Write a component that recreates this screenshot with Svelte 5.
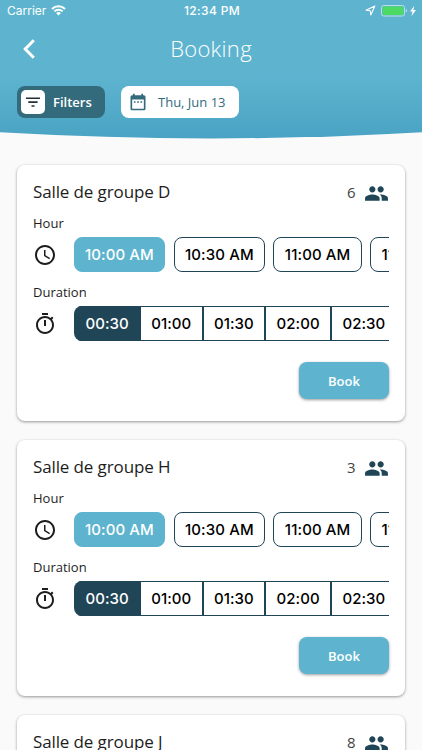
<script lang="ts">
    interface Room {
        name: string;
        capacity: number;
    }

    const rooms: Room[] = [
        {name: 'Salle de groupe D', capacity: 6},
        {name: 'Salle de groupe H', capacity: 3},
        {name: 'Salle de groupe J', capacity: 8},
    ];

    const hours = ['10:00 AM', '10:30 AM', '11:00 AM', '11:30 AM'];
    const durations = ['00:30', '01:00', '01:30', '02:00', '02:30'];

    let selectedHours = $state(rooms.map(() => 0));
    let selectedDurations = $state(rooms.map(() => 0));
</script>

<div class="screen">
    <header>
        <!-- Curved bottom edge of the header -->
        <svg class="backdrop" viewBox="0 0 422 140" preserveAspectRatio="none" aria-hidden="true">
            <defs>
                <linearGradient id="sea" x1="0" y1="0" x2="0" y2="1">
                    <stop offset="0" stop-color="#5eb4cf"/>
                    <stop offset="0.55" stop-color="#5eb4cf"/>
                    <stop offset="1" stop-color="#4aa3c4"/>
                </linearGradient>
            </defs>
            <path d="M0 0H422V132.3Q211 144.5 0 132.3Z" fill="url(#sea)"/>
        </svg>

        <div class="status-bar">
            <div class="status-left">
                <span class="carrier">Carrier</span>
                <svg width="15" height="11" viewBox="0 0 15 11" fill="none" stroke="#fff" stroke-width="2">
                    <path d="M1 4A9.2 9.2 0 0 1 14 4"/>
                    <path d="M3.4 6.4A5.8 5.8 0 0 1 11.6 6.4"/>
                    <path d="M7.5 10.6L5.1 8.1A3.4 3.4 0 0 1 9.9 8.1Z" fill="#fff" stroke="none"/>
                </svg>
            </div>
            <span class="clock">12:34 PM</span>
            <div class="status-right">
                <svg width="11" height="11" viewBox="0 0 11 11" fill="none" stroke="#fff" stroke-width="1.1" stroke-linejoin="round">
                    <path d="M9.8 1L1 5.3L5.2 5.8L5.8 10Z"/>
                </svg>
                <svg width="27" height="12" viewBox="0 0 27 12">
                    <rect x="0.5" y="0.5" width="23" height="10.5" rx="2.2" fill="none" stroke="#b9e0ea"/>
                    <rect x="1.6" y="1.6" width="20.8" height="8.3" rx="1.2" fill="#4cd964"/>
                    <path d="M24.8 4v3.6q1.3-.5 1.3-1.8t-1.3-1.8Z" fill="#b9e0ea"/>
                </svg>
                <svg class="bolt" width="6" height="10" viewBox="0 0 6 10" fill="#fff">
                    <path d="M4.2 0L0 5.6H2.5L1.5 10L6 4.1H3.4Z"/>
                </svg>
            </div>
        </div>

        <div class="title-bar">
            <button class="back" aria-label="Back">
                <svg width="12" height="20" viewBox="0 0 12 20" fill="none" stroke="#fff" stroke-width="3">
                    <path d="M10.8 1.2L2.2 10L10.8 18.8"/>
                </svg>
            </button>
            <h1>Booking</h1>
        </div>

        <div class="tools">
            <button class="filters">
                <span class="filters-icon">
                    <svg width="16" height="12" viewBox="0 0 16 12" fill="#252f35">
                        <path d="M1 1.4H15V3H1ZM3.3 5.3H12.6V6.9H3.3ZM6.5 9.2H9.5V10.7H6.5Z"/>
                    </svg>
                </span>
                Filters
            </button>
            <button class="date">
                <svg width="20" height="20" viewBox="0 0 24 24" fill="#336b7d">
                    <path d="M9 11H7v2h2v-2zm4 0h-2v2h2v-2zm4 0h-2v2h2v-2zm2-7h-1V2h-2v2H8V2H6v2H5c-1.11 0-1.99.9-1.99 2L3 20c0 1.1.89 2 2 2h14c1.1 0 2-.9 2-2V6c0-1.1-.9-2-2-2zm0 16H5V9h14v11z"/>
                </svg>
                <span>Thu, Jun 13</span>
            </button>
        </div>
    </header>

    <main>
        {#each rooms as room, r}
            <section class="card">
                <div class="card-head">
                    <h2>{room.name}</h2>
                    <div class="capacity">
                        <span>{room.capacity}</span>
                        <svg width="25" height="25" viewBox="0 0 24 24" fill="#1f4557">
                            <path d="M16 11c1.66 0 2.99-1.34 2.99-3S17.66 5 16 5c-1.66 0-3 1.34-3 3s1.34 3 3 3zm-8 0c1.66 0 2.99-1.34 2.99-3S9.66 5 8 5C6.34 5 5 6.34 5 8s1.34 3 3 3zm0 2c-2.33 0-7 1.17-7 3.5V19h14v-2.5c0-2.33-4.67-3.5-7-3.5zm8 0c-.29 0-.62.02-.97.05 1.16.84 1.97 1.97 1.97 3.45V19h6v-2.5c0-2.33-4.67-3.5-7-3.5z"/>
                        </svg>
                    </div>
                </div>

                <h3>Hour</h3>
                <div class="row">
                    <svg width="24" height="24" viewBox="0 0 24 24" fill="#1d1d1d">
                        <path d="M11.99 2C6.47 2 2 6.48 2 12s4.47 10 9.99 10C17.52 22 22 17.52 22 12S17.52 2 11.99 2zM12 20c-4.42 0-8-3.58-8-8s3.58-8 8-8 8 3.58 8 8-3.58 8-8 8zm.5-13H11v6l5.25 3.15.75-1.23-4.5-2.67z"/>
                    </svg>
                    <div class="hours">
                        {#each hours as hour, i}
                            <button class="hour" class:selected={selectedHours[r] === i}
                                    onclick={() => selectedHours[r] = i}>{hour}</button>
                        {/each}
                    </div>
                </div>

                <h3>Duration</h3>
                <div class="row">
                    <svg width="24" height="24" viewBox="0 0 24 24" fill="#1d1d1d">
                        <path d="M15 1H9v2h6V1zm-4 13h2V8h-2v6zm8.03-6.61l1.42-1.42c-.43-.51-.9-.99-1.41-1.41l-1.42 1.42C16.07 4.74 14.12 4 12 4c-4.97 0-9 4.03-9 9s4.02 9 9 9 9-4.03 9-9c0-2.12-.74-4.07-1.97-5.61zM12 20c-3.87 0-7-3.13-7-7s3.13-7 7-7 7 3.13 7 7-3.13 7-7 7z"/>
                    </svg>
                    <div class="durations">
                        {#each durations as duration, i}
                            <button class="duration" class:selected={selectedDurations[r] === i}
                                    onclick={() => selectedDurations[r] = i}>{duration}</button>
                        {/each}
                    </div>
                </div>

                <button class="book">Book</button>
            </section>
        {/each}
    </main>
</div>

<style>
    :global(body) {
        background: #fafafa;
    }

    .screen {
        height: 750px;
        overflow: hidden;
        background: #fafafa;
        font-family: 'Open Sans', sans-serif;
        color: #1d1d1d;
    }

    button {
        margin: 0;
        padding: 0;
        border: 0;
        background: none;
        font: inherit;
        color: inherit;
        white-space: nowrap;
    }

    svg {
        display: block;
        flex: none;
    }

    h1, h2, h3 {
        margin: 0;
        font-weight: 400;
    }

    header {
        position: relative;
        height: 140px;
        color: #fff;
    }

    .backdrop {
        position: absolute;
        inset: 0;
        width: 100%;
        height: 140px;
    }

    .status-bar {
        position: relative;
        display: grid;
        grid-template-columns: 1fr auto 1fr;
        align-items: center;
        height: 21px;
        padding: 0 6px 0 7px;
        font-family: Inter, sans-serif;
        font-size: 12px;
    }

    .status-left, .status-right {
        display: flex;
        align-items: center;
        gap: 5px;
    }

    .status-right {
        justify-content: flex-end;
    }

    .clock {
        padding-left: 1px;
        font-weight: 500;
        letter-spacing: 0.35px;
    }

    .bolt {
        margin-left: -3px;
    }

    .title-bar {
        position: relative;
        display: grid;
        grid-template-columns: 60px 1fr 60px;
        align-items: center;
        height: 55px;
    }

    .back {
        padding-left: 23px;
    }

    h1 {
        padding-bottom: 2px;
        font-size: 22px;
        font-weight: 300;
        text-align: center;
        letter-spacing: 0.3px;
    }

    .tools {
        position: relative;
        display: flex;
        gap: 16px;
        padding: 10px 17px 0;
        font-size: 13px;
        font-weight: 600;
    }

    .filters {
        display: flex;
        align-items: center;
        gap: 8px;
        width: 88px;
        height: 32px;
        padding-left: 4px;
        border-radius: 8px;
        background: #336b7d;
    }

    .filters-icon {
        display: grid;
        place-items: center;
        width: 24px;
        height: 24px;
        border-radius: 5px;
        background: #fff;
    }

    .date {
        display: flex;
        align-items: center;
        gap: 10px;
        width: 118px;
        height: 32px;
        padding-left: 7px;
        border-radius: 8px;
        background: #fff;
        color: #336b7d;
        font-weight: 500;
    }

    main {
        display: flex;
        flex-direction: column;
        gap: 19px;
        padding: 25.4px 17px 0 16.5px;
    }

    .card {
        display: flex;
        flex-direction: column;
        flex: none;
        height: 256px;
        box-sizing: border-box;
        padding: 13.5px 16px 22px 16.5px;
        border-radius: 8px;
        background: #fff;
        box-shadow: 0 1px 3px rgba(0, 0, 0, 0.4);
    }

    .card-head {
        display: flex;
        align-items: center;
        justify-content: space-between;
        height: 26px;
    }

    h2 {
        font-size: 17px;
        line-height: 26px;
        letter-spacing: -0.12px;
    }

    .capacity {
        display: flex;
        align-items: center;
        gap: 8.5px;
        padding-top: 3px;
        font-size: 15px;
        color: #444;
    }

    .capacity span {
        padding-bottom: 2px;
    }

    h3 {
        height: 18px;
        margin-top: 9px;
        font-size: 13px;
        line-height: 18px;
    }

    .row {
        display: flex;
        align-items: center;
        gap: 16.5px;
        height: 35px;
        margin-top: 5.5px;
    }

    .row + h3 {
        margin-top: 10.5px;
    }

    .hours, .durations {
        display: flex;
        flex: 1;
        min-width: 0;
        overflow: hidden;
        font-family: Inter, sans-serif;
        font-size: 15px;
        font-weight: 500;
        color: #000;
    }

    .hours {
        gap: 8.4px;
    }

    .hour {
        flex: none;
        height: 35px;
        padding: 0 10.4px;
        border: 1px solid #1f4557;
        border-radius: 8px;
        letter-spacing: 0.1px;
    }

    .hour.selected {
        border-color: #5eb4cf;
        background: #5eb4cf;
        color: #fff;
    }

    .durations {
        border-radius: 8px 0 0 8px;
    }

    .duration {
        flex: none;
        height: 35px;
        padding: 0 10.4px;
        border: solid #1f4557;
        border-width: 1px 2px 1px 0;
        letter-spacing: 0.05px;
    }

    .duration.selected {
        padding: 0 10px 0 12px;
        background: #1f4557;
        color: #fff;
    }

    .book {
        align-self: flex-end;
        width: 90px;
        height: 37px;
        margin-top: auto;
        border-radius: 8px;
        background: #5eb4cf;
        box-shadow: 0 1px 3px rgba(0, 0, 0, 0.4);
        color: #fff;
        font-size: 13px;
        font-weight: 600;
    }
</style>
